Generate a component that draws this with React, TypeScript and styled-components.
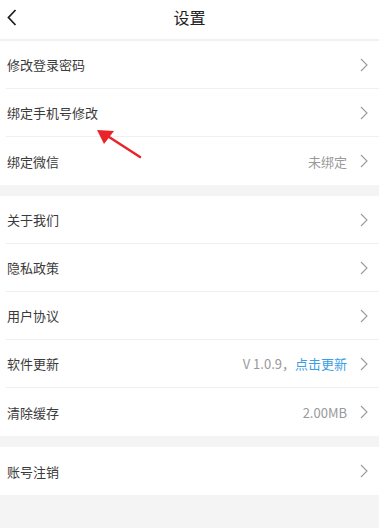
import React from 'react';
import styled, { createGlobalStyle } from 'styled-components';

const GlobalStyle = createGlobalStyle`
    html, body {
        margin: 0;
        padding: 0;
        background: #f4f4f4;
        font-family: "Noto Sans CJK SC", "Noto Sans", sans-serif;
    }
`;

const Page = styled.div`
    position: relative;
    width: 379px;
    min-height: 528px;
    background: #f4f4f4;
`;

const Header = styled.div`
    height: 39px;
    display: flex;
    align-items: center;
    justify-content: center;
    position: relative;
    background: #fff;
    border-bottom: 2px solid #f1f1f1;
`;

const BackButton = styled.div`
    position: absolute;
    left: 7px;
    top: 8px;
    width: 12px;
    height: 18px;
    display: flex;
    align-items: center;
`;

const Title = styled.h1`
    margin: 0;
    font-size: 16px;
    font-weight: 400;
    color: #222;
    line-height: 1;
    margin-top: -5px;
`;

const Group = styled.div`
    background: #fff;
    margin-bottom: 11px;
`;

const Row = styled.div<{ $last?: boolean }>`
    height: 48px;
    box-sizing: border-box;
    display: flex;
    align-items: center;
    margin: 0 0 0 6px;
    padding: 0 11px 0 1px;
    border-bottom: ${({ $last }) => ($last ? 'none' : '1px solid #f0f0f0')};
`;

const Label = styled.span`
    flex: 1;
    font-size: 13px;
    color: #3a3a3a;
`;

const Value = styled.span`
    font-size: 13px;
    color: #999;
    margin-right: 13px;
`;

const Link = styled.span`
    color: #3a9de6;
`;

const Chevron = () => (
    <svg width="8" height="14" viewBox="0 0 8 14">
        <path d="M1 1 L7 7 L1 13" fill="none" stroke="#9a9a9a" strokeWidth="1.1" />
    </svg>
);

const Arrow = styled.svg`
    position: absolute;
    left: 92px;
    top: 122px;
`;

type Item = { label: string; value?: React.ReactNode };

const groups: Item[][] = [
    [
        { label: '修改登录密码' },
        { label: '绑定手机号修改' },
        { label: '绑定微信', value: '未绑定' },
    ],
    [
        { label: '关于我们' },
        { label: '隐私政策' },
        { label: '用户协议' },
        { label: '软件更新', value: <>V 1.0.9，<Link>点击更新</Link></> },
        { label: '清除缓存', value: '2.00MB' },
    ],
    [{ label: '账号注销' }],
];

const App: React.FC = () => {
    return (
        <Page>
            <GlobalStyle />
            <Header>
                <BackButton>
                    <svg width="10" height="17" viewBox="0 0 10 17">
                        <path d="M8.5 1 L1.5 8.5 L8.5 16" fill="none" stroke="#222" strokeWidth="1.8" />
                    </svg>
                </BackButton>
                <Title>设置</Title>
            </Header>
            {groups.map((group, gi) => (
                <Group key={gi}>
                    {group.map((item, i) => (
                        <Row key={i} $last={i === group.length - 1}>
                            <Label>{item.label}</Label>
                            {item.value && <Value>{item.value}</Value>}
                            <Chevron />
                        </Row>
                    ))}
                </Group>
            ))}
            <Arrow width="52" height="40" viewBox="0 0 52 40">
                <line x1="48" y1="35" x2="14" y2="13" stroke="#e8242a" strokeWidth="2.5" strokeLinecap="round" />
                <polygon points="5,8 22,9 12,22" fill="#e8242a" />
            </Arrow>
        </Page>
    );
};

export default App;
